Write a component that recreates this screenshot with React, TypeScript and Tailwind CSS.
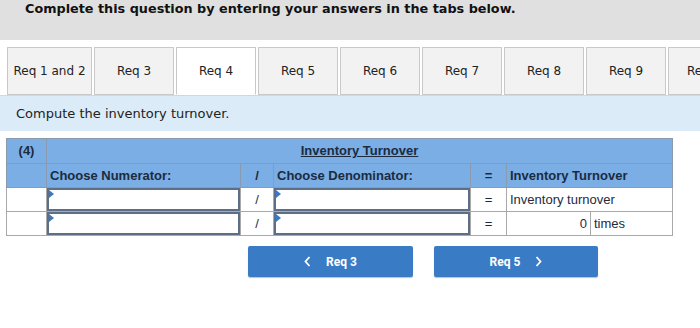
import React from "react";

const tabs = ["Req 1 and 2", "Req 3", "Req 4", "Req 5", "Req 6", "Req 7", "Req 8", "Req 9", "Req 10"];

function InputCell() {
  return (
    <td className="p-0 border border-[#a9a9a9] h-[23px]">
      <div className="relative w-full h-[23px] border-2 border-[#5d6f86] bg-white">
        <div className="absolute left-0 top-0 w-0 h-0 border-t-[4px] border-b-[4px] border-l-[5px] border-t-transparent border-b-transparent border-l-[#3b78c4]" />
      </div>
    </td>
  );
}

export default function App() {
  return (
    <div className="w-[700px] h-[328px] bg-white overflow-hidden relative" style={{ fontFamily: '"DejaVu Sans", Verdana, sans-serif' }}>
      <div className="h-[40px] bg-[#e0e0e0] pl-[25px] pt-[1px]">
        <div className="text-[12.8px] font-bold leading-[15px] text-[#111]">
          Complete this question by entering your answers in the tabs below.
        </div>
      </div>
      <div className="flex gap-[2px] pl-[7px] mt-[7px] h-[48px] whitespace-nowrap">
        {tabs.map((t, i) => (
          <div
            key={t}
            className={
              "shrink-0 h-full flex items-center justify-center text-[12px] text-[#222] border border-[#c9c9c9] " +
              (i === 0 ? "w-[85px] " : "w-[80px] ") +
              (i === 2 ? "bg-white border-b-white" : "bg-[#f2f2f2]")
            }
          >
            {t}
          </div>
        ))}
      </div>
      <div className="h-[36px] bg-[#dcebf8] pl-[16px] flex items-center text-[13px] text-[#222] border-t border-[#c9d9e8]">
        Compute the inventory turnover.
      </div>
      <div className="pl-[6px] mt-[7px]" style={{ fontFamily: '"Liberation Sans", Arial, sans-serif' }}>
        <table className="border-collapse border border-[#8f8f8f] text-[13px] text-[#1c2b3f] table-fixed w-[666px]">
          <colgroup>
            <col className="w-[40px]" />
            <col className="w-[194px]" />
            <col className="w-[33px]" />
            <col className="w-[197px]" />
            <col className="w-[36px]" />
            <col className="w-[84px]" />
            <col className="w-[82px]" />
          </colgroup>
          <tbody>
            <tr className="h-[25px] bg-[#7aaee4]">
              <td className="border border-[#8a9bb0] text-center font-bold">(4)</td>
              <td colSpan={6} className="border border-[#8a9bb0] text-center font-bold underline">
                Inventory Turnover
              </td>
            </tr>
            <tr className="h-[24px] bg-[#7aaee4] font-bold">
              <td className="border border-[#8a9bb0]" />
              <td className="border border-[#8a9bb0] pl-[3px]">Choose Numerator:</td>
              <td className="border border-[#8a9bb0] text-center">/</td>
              <td className="border border-[#8a9bb0] pl-[3px]">Choose Denominator:</td>
              <td className="border border-[#8a9bb0] text-center">=</td>
              <td colSpan={2} className="border border-[#8a9bb0] pl-[3px]">Inventory Turnover</td>
            </tr>
            <tr className="h-[23px] bg-white">
              <td className="border border-[#a9a9a9]" />
              <InputCell />
              <td className="border border-[#a9a9a9] text-center">/</td>
              <InputCell />
              <td className="border border-[#a9a9a9] text-center">=</td>
              <td colSpan={2} className="border border-[#a9a9a9] pl-[3px]">Inventory turnover</td>
            </tr>
            <tr className="h-[24px] bg-white">
              <td className="border border-[#a9a9a9]" />
              <InputCell />
              <td className="border border-[#a9a9a9] text-center">/</td>
              <InputCell />
              <td className="border border-[#a9a9a9] text-center">=</td>
              <td className="border border-[#a9a9a9] text-right pr-[3px]">0</td>
              <td className="border border-[#a9a9a9] pl-[3px]">times</td>
            </tr>
          </tbody>
        </table>
      </div>
      <div className="flex pl-[248px] gap-[21px] mt-[10px]" style={{ fontFamily: 'Roboto, "Liberation Sans", sans-serif' }}>
        <div className="w-[165px] h-[31px] bg-[#3a7bc6] rounded-[2px] shadow-[0_1px_1px_rgba(0,0,0,0.25)] flex items-center justify-center text-white text-[12px] font-bold gap-[15px]">
          <svg width="7" height="11" viewBox="0 0 7 11"><path d="M5.5 1 L1.5 5.5 L5.5 10" stroke="white" strokeWidth="1.8" fill="none" /></svg>
          <span>Req 3</span>
        </div>
        <div className="w-[164px] h-[31px] bg-[#3a7bc6] rounded-[2px] shadow-[0_1px_1px_rgba(0,0,0,0.25)] flex items-center justify-center text-white text-[12px] font-bold gap-[15px]">
          <span>Req 5</span>
          <svg width="7" height="11" viewBox="0 0 7 11"><path d="M1.5 1 L5.5 5.5 L1.5 10" stroke="white" strokeWidth="1.8" fill="none" /></svg>
        </div>
      </div>
    </div>
  );
}
